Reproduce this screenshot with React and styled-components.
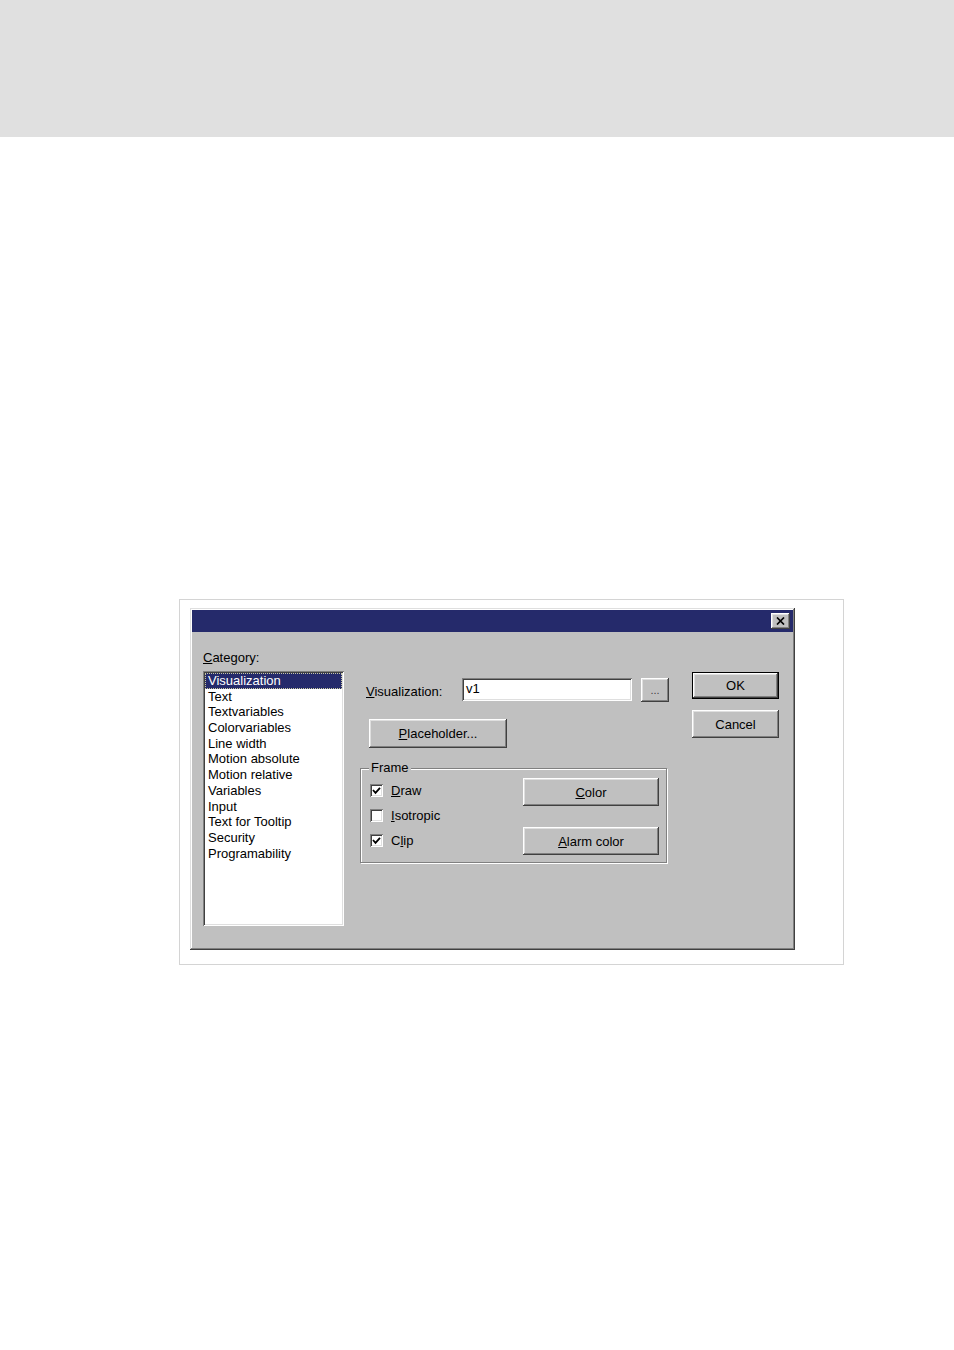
import React from "react";
import styled, { createGlobalStyle } from "styled-components";

const GlobalStyle = createGlobalStyle`
  html, body {
    margin: 0;
    padding: 0;
    background: #ffffff;
  }
  body {
    font-family: "Liberation Sans", Arial, sans-serif;
    font-size: 13px;
    color: #000;
  }
`;

const categories = [
  "Visualization",
  "Text",
  "Textvariables",
  "Colorvariables",
  "Line width",
  "Motion absolute",
  "Motion relative",
  "Variables",
  "Input",
  "Text for Tooltip",
  "Security",
  "Programability",
];

const raised = `
  box-shadow: inset -1px -1px #404040, inset 1px 1px #ffffff,
    inset -2px -2px #808080, inset 2px 2px #dfdfdf;
`;

const sunken = `
  box-shadow: inset 1px 1px #808080, inset -1px -1px #ffffff,
    inset 2px 2px #404040, inset -2px -2px #dfdfdf;
`;

export default function App() {
  return (
    <Page>
      <GlobalStyle />
      <HeaderBand />
      <Figure>
        <Dialog>
          <TitleBar>
            <CloseButton aria-label="close">
              <svg width="9" height="8" viewBox="0 0 9 8">
                <path d="M1 0.5 L8 7.5 M8 0.5 L1 7.5" stroke="#000" strokeWidth="1.7" />
              </svg>
            </CloseButton>
          </TitleBar>
          <Body>
            <LeftColumn>
              <Label>
                <u>C</u>ategory:
              </Label>
              <ListBox>
                {categories.map((c, i) => (
                  <ListItem key={c} selected={i === 0}>
                    {c}
                  </ListItem>
                ))}
              </ListBox>
            </LeftColumn>

            <MiddleColumn>
              <FieldRow>
                <FieldLabel>
                  <u>V</u>isualization:
                </FieldLabel>
                <TextInput>v1</TextInput>
                <Button width={28} height={24} small>
                  ...
                </Button>
              </FieldRow>
              <PlaceholderWrap>
                <Button width={138} height={29}>
                  <u>P</u>laceholder...
                </Button>
              </PlaceholderWrap>
              <GroupBox>
                <Legend>Frame</Legend>
                <Checks>
                  <CheckRow>
                    <CheckBox checked />
                    <span>
                      <u>D</u>raw
                    </span>
                  </CheckRow>
                  <CheckRow>
                    <CheckBox />
                    <span>
                      <u>I</u>sotropic
                    </span>
                  </CheckRow>
                  <CheckRow>
                    <CheckBox checked />
                    <span>
                      C<u>l</u>ip
                    </span>
                  </CheckRow>
                </Checks>
                <GroupButtons>
                  <Button width={136} height={28}>
                    <u>C</u>olor
                  </Button>
                  <Button width={136} height={28}>
                    <u>A</u>larm color
                  </Button>
                </GroupButtons>
              </GroupBox>
            </MiddleColumn>

            <RightColumn>
              <DefaultButton>
                <Button width={85} height={25}>
                  OK
                </Button>
              </DefaultButton>
              <Button width={87} height={28}>
                Cancel
              </Button>
            </RightColumn>
          </Body>
        </Dialog>
      </Figure>
    </Page>
  );
}

function CheckBox({ checked }) {
  return (
    <Box>
      {checked && (
        <svg width="9" height="9" viewBox="0 0 9 9">
          <path d="M1 4 L3.5 6.8 L8 1.8" stroke="#000" strokeWidth="1.8" fill="none" />
        </svg>
      )}
    </Box>
  );
}

const Page = styled.div`
  min-height: 1350px;
  background: #ffffff;
`;

const HeaderBand = styled.div`
  height: 137px;
  background: #e0e0e0;
`;

const Figure = styled.div`
  margin: 462px 0 0 179px;
  width: 665px;
  height: 366px;
  border: 1px solid #d4d4d4;
  padding: 8px 0 0 10px;
  box-sizing: border-box;
  background: #ffffff;
`;

const Dialog = styled.div`
  width: 605px;
  height: 342px;
  box-sizing: border-box;
  padding: 2px;
  background: #c0c0c0;
  box-shadow: inset -1px -1px #404040, inset 1px 1px #dfdfdf,
    inset -2px -2px #808080, inset 2px 2px #ffffff;
  display: flex;
  flex-direction: column;
`;

const TitleBar = styled.div`
  height: 22px;
  background: #252a6b;
  display: flex;
  align-items: center;
  justify-content: flex-end;
  padding-right: 3px;
`;

const CloseButton = styled.div`
  width: 19px;
  height: 16px;
  background: #c0c0c0;
  ${raised}
  display: flex;
  align-items: center;
  justify-content: center;
`;

const Body = styled.div`
  display: flex;
  padding: 18px 14px 0 11px;
`;

const LeftColumn = styled.div`
  width: 141px;
  display: flex;
  flex-direction: column;
`;

const Label = styled.div`
  line-height: 16px;
  margin-bottom: 5px;
`;

const ListBox = styled.div`
  height: 255px;
  background: #ffffff;
  ${sunken}
  padding: 2px;
  box-sizing: border-box;
`;

const ListItem = styled.div`
  height: 15.7px;
  line-height: 16.5px;
  padding-left: 3px;
  white-space: nowrap;
  background: ${(p) => (p.selected ? "#252a6b" : "transparent")};
  color: ${(p) => (p.selected ? "#ffffff" : "#000000")};
  outline: ${(p) => (p.selected ? "1px dotted #c8c8a0" : "none")};
  outline-offset: -1px;
`;

const MiddleColumn = styled.div`
  width: 309px;
  margin-left: 16px;
  margin-top: 28px;
  display: flex;
  flex-direction: column;
`;

const FieldRow = styled.div`
  display: flex;
  align-items: flex-start;
  padding-left: 6px;
`;

const FieldLabel = styled.div`
  width: 96px;
  line-height: 16px;
  padding-top: 6px;
`;

const TextInput = styled.div`
  width: 170px;
  height: 23px;
  box-sizing: border-box;
  background: #ffffff;
  ${sunken}
  padding: 3px 0 0 4px;
  line-height: 16px;
  margin-right: 9px;
`;

const Button = styled.div`
  width: ${(p) => p.width}px;
  height: ${(p) => p.height}px;
  box-sizing: border-box;
  background: #c0c0c0;
  ${raised}
  display: flex;
  align-items: center;
  justify-content: center;
  font-size: ${(p) => (p.small ? "11px" : "13px")};
  color: ${(p) => (p.small ? "#404040" : "#000")};
  white-space: nowrap;
`;

const PlaceholderWrap = styled.div`
  margin: 17px 0 0 9px;
`;

const GroupBox = styled.div`
  position: relative;
  margin-top: 20px;
  width: 307px;
  height: 95px;
  box-sizing: border-box;
  border: 1px solid #808080;
  box-shadow: 1px 1px #ffffff, inset 1px 1px #ffffff;
  padding: 9px 7px 7px 9px;
  display: flex;
  justify-content: space-between;
`;

const Legend = styled.div`
  position: absolute;
  top: -9px;
  left: 8px;
  padding: 0 2px;
  background: #c0c0c0;
  line-height: 16px;
`;

const Checks = styled.div`
  display: flex;
  flex-direction: column;
  gap: 10px;
  padding-top: 5px;
`;

const CheckRow = styled.div`
  display: flex;
  align-items: center;
  gap: 8px;
  height: 15px;
`;

const Box = styled.div`
  width: 13px;
  height: 13px;
  box-sizing: border-box;
  background: #ffffff;
  ${sunken}
  display: flex;
  align-items: center;
  justify-content: center;
`;

const GroupButtons = styled.div`
  display: flex;
  flex-direction: column;
  gap: 21px;
`;

const RightColumn = styled.div`
  margin-left: 23px;
  margin-top: 22px;
  display: flex;
  flex-direction: column;
  gap: 11px;
`;

const DefaultButton = styled.div`
  border: 1px solid #000000;
  width: 87px;
  height: 27px;
  box-sizing: border-box;
`;
